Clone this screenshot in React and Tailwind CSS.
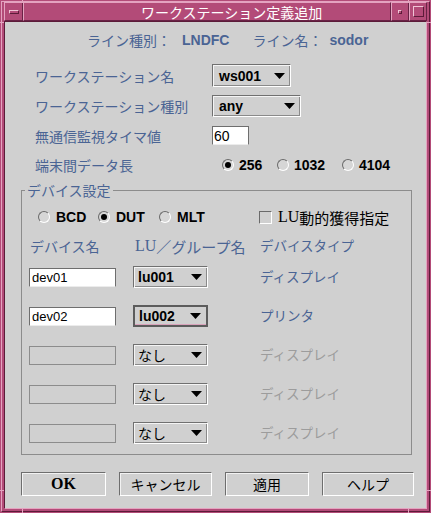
import React from "react";

const blue = "text-[#4a6494]";
const sans = "font-['Liberation_Sans',sans-serif]";
const serif = "font-['Liberation_Serif',serif]";

function Arrow() {
  return (
    <svg width="11" height="6" viewBox="0 0 11 6">
      <polygon points="0,0 11,0 5.5,6" fill="#000" />
    </svg>
  );
}

function Radio({ on }) {
  return (
    <span className="w-[12px] h-[12px] rounded-full border border-t-[#6a6a6a] border-l-[#6a6a6a] border-r-white border-b-white bg-[#d6d6d6] flex items-center justify-center shrink-0">
      {on && <span className="w-[6px] h-[6px] rounded-full bg-black" />}
    </span>
  );
}

function Select({ value, w, pl = "pl-[6px]", pr = "pr-[5px]", jp, focused }) {
  const frame = focused
    ? "border-2 border-[#5c5c5c] shadow-[inset_0_-1px_0_#d9a3bb]"
    : "border border-t-[#707070] border-l-[#707070] border-r-white border-b-white shadow-[inset_1px_1px_0_#f4f4f4,inset_-1px_-1px_0_#8a8a8a]";
  return (
    <div className={`${w} h-full flex items-center justify-between ${pl} ${pr} ${frame}`}>
      <span className={jp ? "text-[14px] text-black leading-none" : `${sans} font-bold text-[14px] text-black leading-none`}>
        {value}
      </span>
      <Arrow />
    </div>
  );
}

function Button({ w, children, ok }) {
  return (
    <div
      className={`${w} h-[24px] flex items-center justify-center border border-t-[#6e6e6e] border-l-[#6e6e6e] border-r-white border-b-white shadow-[inset_1px_1px_0_#f2f2f2] ${
        ok ? `${serif} font-bold text-[16px]` : "text-[14px]"
      } text-black leading-none`}
    >
      {children}
    </div>
  );
}

const rows = [
  { name: "dev01", lu: "lu001", type: "ディスプレイ", on: true },
  { name: "dev02", lu: "lu002", type: "プリンタ", on: true, focused: true },
  { name: "", lu: "なし", type: "ディスプレイ" },
  { name: "", lu: "なし", type: "ディスプレイ" },
  { name: "", lu: "なし", type: "ディスプレイ" },
];

export default function App() {
  return (
    <div className="relative w-[431px] h-[513px] bg-[#b34b78] p-[1px] font-['Noto_Sans_CJK_JP',sans-serif]">
      {/* resize-corner notches on the frame */}
      <span className="absolute left-[22px] top-0 w-[1px] h-[3px] bg-[#e4a3c0]" />
      <span className="absolute left-[408px] top-0 w-[1px] h-[3px] bg-[#e4a3c0]" />
      <span className="absolute left-[22px] bottom-0 w-[1px] h-[4px] bg-[#e4a3c0]" />
      <span className="absolute left-[408px] bottom-0 w-[1px] h-[4px] bg-[#e4a3c0]" />
      <span className="absolute left-0 top-[22px] w-[4px] h-[1px] bg-[#e4a3c0]" />
      <span className="absolute right-0 top-[22px] w-[4px] h-[1px] bg-[#e4a3c0]" />
      <span className="absolute left-0 bottom-[22px] w-[4px] h-[1px] bg-[#e4a3c0]" />
      <span className="absolute right-0 bottom-[22px] w-[4px] h-[1px] bg-[#e4a3c0]" />

      <div className="h-full flex flex-col border border-t-[#e4a3c0] border-l-[#e4a3c0] border-r-[#5c1b39] border-b-[#5c1b39] px-[2px] pb-[2px]">
        {/* title bar */}
        <div className="h-[19px] flex shrink-0">
          <div className="w-[19px] flex items-center justify-center border border-t-[#e4a3c0] border-l-[#e4a3c0] border-r-[#6a2246] border-b-[#6a2246]">
            <span className="w-[10px] h-[4px] border border-t-[#f0c4d6] border-l-[#f0c4d6] border-r-[#5c1b39] border-b-[#5c1b39]" />
          </div>
          <div className="flex-1 flex items-center pl-[117px] border border-t-[#e4a3c0] border-l-[#e4a3c0] border-r-[#6a2246] border-b-[#6a2246] text-white text-[14px] leading-none">
            ワークステーション定義追加
          </div>
          <div className="w-[18px] flex items-center justify-center border border-t-[#e4a3c0] border-l-[#e4a3c0] border-r-[#6a2246] border-b-[#6a2246]">
            <span className="w-[4px] h-[4px] border border-t-[#f0c4d6] border-l-[#f0c4d6] border-r-[#5c1b39] border-b-[#5c1b39]" />
          </div>
          <div className="w-[18px] flex items-center justify-center border border-t-[#e4a3c0] border-l-[#e4a3c0] border-r-[#6a2246] border-b-[#6a2246]">
            <span className="w-[11px] h-[11px] border border-t-[#f0c4d6] border-l-[#f0c4d6] border-r-[#5c1b39] border-b-[#5c1b39]" />
          </div>
        </div>

        {/* client */}
        <div className="flex-1 flex flex-col bg-[#d0d0d0] border border-t-[#5c1b39] border-l-[#5c1b39] border-r-[#e4a3c0] border-b-[#e4a3c0]">
          <div className={`mt-[10px] h-[16px] flex items-center pl-[82px] text-[14px] leading-none ${blue}`}>
            <span>ライン種別：</span>
            <span className={`${sans} font-bold ml-[11px]`}>LNDFC</span>
            <span className="ml-[23px]">ライン名：</span>
            <span className={`${sans} font-bold ml-[7px]`}>sodor</span>
          </div>

          <div className="mt-[16px] h-[23px] flex items-center pl-[30px]">
            <span className={`w-[177px] text-[14px] leading-none ${blue}`}>ワークステーション名</span>
            <Select value="ws001" w="w-[79px]" />
          </div>

          <div className="mt-[8px] h-[22px] flex items-center pl-[30px]">
            <span className={`w-[177px] text-[14px] leading-none ${blue}`}>ワークステーション種別</span>
            <Select value="any" w="w-[89px]" />
          </div>

          <div className="mt-[9px] h-[19px] flex items-center pl-[30px]">
            <span className={`w-[177px] text-[14px] leading-none ${blue}`}>無通信監視タイマ値</span>
            <div className={`w-[37px] h-full bg-white border border-[#6e6e6e] border-b-[#ececec] flex items-center pl-[1px] ${sans} text-[14px] text-black leading-none`}>
              60
            </div>
          </div>

          <div className="mt-[12px] h-[16px] flex items-center pl-[30px]">
            <span className={`w-[187px] text-[14px] leading-none ${blue}`}>端末間データ長</span>
            <div className={`flex items-center ${sans} font-bold text-[14px] text-black leading-none`}>
              <div className="w-[55px] flex items-center gap-[5px]">
                <Radio on />
                <span>256</span>
              </div>
              <div className="w-[65px] flex items-center gap-[5px]">
                <Radio />
                <span>1032</span>
              </div>
              <div className="flex items-center gap-[5px]">
                <Radio />
                <span>4104</span>
              </div>
            </div>
          </div>

          <fieldset className="mt-[9px] ml-[16px] mr-[14px] border border-[#8c8c8c] pb-[10px]">
            <legend className={`ml-[3px] px-[2px] h-[16px] leading-[16px] text-[14px] ${blue}`}>デバイス設定</legend>

            <div className="mt-[11px] h-[16px] flex items-center pl-[16px] text-black leading-none">
              <div className={`w-[60px] flex items-center gap-[6px] ${sans} font-bold text-[14px]`}>
                <Radio />
                <span>BCD</span>
              </div>
              <div className={`w-[61px] flex items-center gap-[6px] ${sans} font-bold text-[14px]`}>
                <Radio on />
                <span>DUT</span>
              </div>
              <div className={`w-[100px] flex items-center gap-[6px] ${sans} font-bold text-[14px]`}>
                <Radio />
                <span>MLT</span>
              </div>
              <div className="flex items-center gap-[6px]">
                <span className="w-[13px] h-[13px] border border-t-[#6a6a6a] border-l-[#6a6a6a] border-r-white border-b-white" />
                <span className="flex items-center">
                  <span className={`${serif} text-[16px]`}>LU</span>
                  <span className="text-[15px]">動的獲得指定</span>
                </span>
              </div>
            </div>

            <div className={`mt-[12px] h-[18px] flex items-center pl-[7px] leading-none ${blue}`}>
              <span className="w-[104px] pl-[1px] text-[14px]">デバイス名</span>
              <span className="w-[127px] pl-[2px] flex items-center">
                <span className={`${serif} text-[16px]`}>LU</span>
                <span className="text-[15px]">／グループ名</span>
              </span>
              <span className="text-[13.5px]">デバイスタイプ</span>
            </div>

            {rows.map((r, i) => (
              <div key={i} className={`${i === 0 ? "mt-[11px]" : "mt-[17px]"} h-[22px] flex items-center pl-[7px]`}>
                <div className="w-[104px]">
                  <div
                    className={`w-[87px] h-[19px] flex items-center pl-[2px] ${sans} text-[13px] text-black leading-none ${
                      r.on ? "bg-white border border-[#6e6e6e] border-b-[#ececec]" : "border border-[#8c8c8c]"
                    }`}
                  >
                    {r.name}
                  </div>
                </div>
                <div className="w-[127px] h-full">
                  <Select
                    value={r.lu}
                    w="w-[75px]"
                    pl="pl-[4px]"
                    pr="pr-[5px]"
                    jp={!r.on}
                    focused={r.focused}
                  />
                </div>
                <span className={`text-[13.5px] leading-none ${r.on ? blue : "text-[#9c9c9c]"}`}>{r.type}</span>
              </div>
            ))}
          </fieldset>

          <div className="mt-[17px] flex gap-[13px] pl-[16px]">
            <Button w="w-[85px]" ok>OK</Button>
            <Button w="w-[93px]">キャンセル</Button>
            <Button w="w-[84px]">適用</Button>
            <Button w="w-[92px]">ヘルプ</Button>
          </div>
        </div>
      </div>
    </div>
  );
}
